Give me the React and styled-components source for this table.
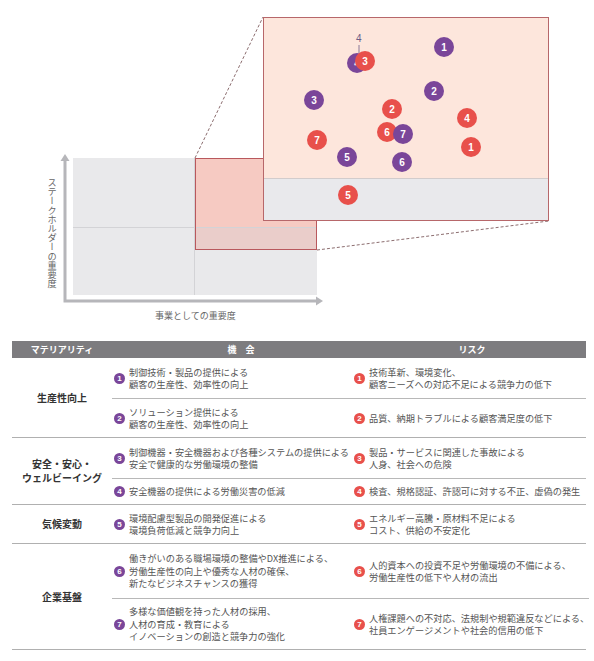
import React from "react"
import styled, { createGlobalStyle } from "styled-components"

const PURPLE = "#7a4699"
const RED = "#e8504b"

const GlobalStyle = createGlobalStyle`
  body {
    margin: 0;
    background: #fff;
    font-family: "Noto Sans CJK JP", "Noto Sans", sans-serif;
    color: #555;
  }
`

const Page = styled.div`
  width: 594px;
  height: 661px;
  display: flex;
  flex-direction: column;
`

const Chart = styled.div`
  position: relative;
  height: 341px;
  flex: none;
`

const ChartSvg = styled.svg`
  position: absolute;
  left: 0;
  top: 0;
`

const AxisLabelY = styled.div`
  position: absolute;
  left: 46px;
  top: 178px;
  writing-mode: vertical-rl;
  font-size: 9.2px;
  line-height: 12px;
  color: #666;
`

const AxisLabelX = styled.div`
  position: absolute;
  left: 155px;
  top: 309px;
  font-size: 9px;
  line-height: 14px;
  color: #666;
`

const Marker = styled.div`
  position: absolute;
  left: ${p => p.$x - 10}px;
  top: ${p => p.$y - 10}px;
  width: 20px;
  height: 20px;
  border-radius: 50%;
  background: ${p => (p.$tone === "purple" ? PURPLE : RED)};
  color: #fff;
  font-family: "Liberation Sans", Arial, sans-serif;
  font-weight: bold;
  font-size: 10px;
  display: flex;
  align-items: center;
  justify-content: center;
`

const Callout = styled.div`
  position: absolute;
  left: 356px;
  top: 33px;
  font-family: "Liberation Sans", Arial, sans-serif;
  font-size: 10px;
  color: #6c5c86;
`

const Table = styled.div`
  margin-left: 12px;
  width: 574px;
  display: flex;
  flex-direction: column;
`

const HeadRow = styled.div`
  display: grid;
  grid-template-columns: 100px 238px 1fr;
  height: 17px;
  background: #7d7c7f;
  color: #fff;
  font-size: 9px;
  font-weight: bold;
  align-items: center;
`

const HeadCell = styled.div`
  text-align: center;
  padding-left: ${p => p.$shift || 0}px;
`

const Group = styled.div`
  display: grid;
  grid-template-columns: 100px 1fr;
  border-bottom: 1px solid #b0b0b0;
`

const Materiality = styled.div`
  display: flex;
  align-items: center;
  justify-content: center;
  text-align: center;
  font-size: 10px;
  line-height: 14px;
  font-weight: bold;
  color: #333;
`

const Items = styled.div`
  display: flex;
  flex-direction: column;
`

const ItemRow = styled.div`
  box-sizing: border-box;
  height: ${p => p.$h}px;
  display: grid;
  grid-template-columns: 238px 1fr;
  & + & {
    border-top: 1px solid #b8b8b8;
  }
`

const Cell = styled.div`
  display: flex;
  align-items: center;
  gap: 4px;
  padding-left: ${p => p.$pad}px;
`

const Badge = styled.span`
  flex: none;
  width: 11px;
  height: 11px;
  border-radius: 50%;
  background: ${p => (p.$tone === "purple" ? PURPLE : RED)};
  color: #fff;
  font-family: "Liberation Sans", Arial, sans-serif;
  font-weight: bold;
  font-size: 8px;
  display: flex;
  align-items: center;
  justify-content: center;
`

const Text = styled.div`
  font-size: 9.2px;
  line-height: 12.5px;
  color: #555;
  white-space: nowrap;
`

const markers = [
  { n: 4, tone: "purple", x: 357, y: 63 },
  { n: 3, tone: "red", x: 365, y: 61 },
  { n: 1, tone: "purple", x: 444, y: 47 },
  { n: 2, tone: "purple", x: 434, y: 91 },
  { n: 3, tone: "purple", x: 314, y: 100 },
  { n: 2, tone: "red", x: 392, y: 109 },
  { n: 4, tone: "red", x: 467, y: 118 },
  { n: 7, tone: "red", x: 317, y: 140 },
  { n: 6, tone: "red", x: 387, y: 132 },
  { n: 7, tone: "purple", x: 403, y: 134 },
  { n: 1, tone: "red", x: 471, y: 147 },
  { n: 5, tone: "purple", x: 347, y: 157 },
  { n: 6, tone: "purple", x: 402, y: 162 },
  { n: 5, tone: "red", x: 348, y: 195 },
]

const groups = [
  {
    label: ["生産性向上"],
    items: [
      { h: 40, n: 1, opp: ["制御技術・製品の提供による", "顧客の生産性、効率性の向上"], risk: ["技術革新、環境変化、", "顧客ニーズへの対応不足による競争力の低下"] },
      { h: 39, n: 2, opp: ["ソリューション提供による", "顧客の生産性、効率性の向上"], risk: ["品質、納期トラブルによる顧客満足度の低下"] },
    ],
  },
  {
    label: ["安全・安心・", "ウェルビーイング"],
    items: [
      { h: 40, n: 3, opp: ["制御機器・安全機器および各種システムの提供による", "安全で健康的な労働環境の整備"], risk: ["製品・サービスに関連した事故による", "人身、社会への危険"] },
      { h: 26, n: 4, opp: ["安全機器の提供による労働災害の低減"], risk: ["検査、規格認証、許認可に対する不正、虚偽の発生"] },
    ],
  },
  {
    label: ["気候変動"],
    items: [
      { h: 38, n: 5, opp: ["環境配慮型製品の開発促進による", "環境負荷低減と競争力向上"], risk: ["エネルギー高騰・原材料不足による", "コスト、供給の不安定化"] },
    ],
  },
  {
    label: ["企業基盤"],
    items: [
      { h: 54, n: 6, opp: ["働きがいのある職場環境の整備やDX推進による、", "労働生産性の向上や優秀な人材の確保、", "新たなビジネスチャンスの獲得"], risk: ["人的資本への投資不足や労働環境の不備による、", "労働生産性の低下や人材の流出"] },
      { h: 51, n: 7, opp: ["多様な価値観を持った人材の採用、", "人材の育成・教育による", "イノベーションの創造と競争力の強化"], risk: ["人権課題への不対応、法規制や規範違反などによる、", "社員エンゲージメントや社会的信用の低下"] },
    ],
  },
]

const Lines = ({ lines }) => (
  <Text>
    {lines.map((l, i) => (
      <div key={i}>{l}</div>
    ))}
  </Text>
)

const MapChart = () => (
  <Chart>
    <ChartSvg width="594" height="341">
      <rect x="73" y="158" width="244" height="137" fill="#e9e9eb" />
      <line x1="73" y1="227.5" x2="317" y2="227.5" stroke="#d3d3d6" />
      <line x1="194.5" y1="158" x2="194.5" y2="295" stroke="#d3d3d6" />
      <rect x="195" y="158" width="122" height="69" fill="#f6cac2" />
      <rect x="195" y="228" width="122" height="22" fill="#eacdca" />
      <rect x="195.5" y="158.5" width="121" height="91" fill="none" stroke="#b9585d" />
      <polyline points="65,160 65,301 318,301" fill="none" stroke="#b6b6ba" strokeWidth="3" />
      <polygon points="65,154 60.5,161 69.5,161" fill="#b6b6ba" />
      <polygon points="323,301 316,296.5 316,305.5" fill="#b6b6ba" />
      <line x1="195" y1="158" x2="263" y2="17" stroke="#8c6d6f" strokeDasharray="3 2" />
      <line x1="317" y1="250" x2="549" y2="221" stroke="#8c6d6f" strokeDasharray="3 2" />
      <rect x="263" y="17" width="286" height="161" fill="#fde6dc" />
      <rect x="263" y="178" width="286" height="43" fill="#e9e9ec" />
      <line x1="263" y1="178.5" x2="549" y2="178.5" stroke="#d2cccc" />
      <rect x="263.5" y="17.5" width="285" height="203" fill="none" stroke="#b7676a" />
      <line x1="359" y1="45" x2="359" y2="53" stroke="#6c5c86" strokeWidth="0.8" />
    </ChartSvg>
    <Callout>4</Callout>
    {markers.map((m, i) => (
      <Marker key={i} $x={m.x} $y={m.y} $tone={m.tone}>
        {m.n}
      </Marker>
    ))}
    <AxisLabelY>ステークホルダーの重要度</AxisLabelY>
    <AxisLabelX>事業としての重要度</AxisLabelX>
  </Chart>
)

const App = () => (
  <Page>
    <GlobalStyle />
    <MapChart />
    <Table>
      <HeadRow>
        <HeadCell>マテリアリティ</HeadCell>
        <HeadCell $shift={20}>機　会</HeadCell>
        <HeadCell $shift={8}>リスク</HeadCell>
      </HeadRow>
      {groups.map((g, gi) => (
        <Group key={gi}>
          <Materiality>
            <div>
              {g.label.map((l, i) => (
                <div key={i}>{l}</div>
              ))}
            </div>
          </Materiality>
          <Items>
            {g.items.map(it => (
              <ItemRow key={it.n} $h={it.h}>
                <Cell $pad={2}>
                  <Badge $tone="purple">{it.n}</Badge>
                  <Lines lines={it.opp} />
                </Cell>
                <Cell $pad={4}>
                  <Badge $tone="red">{it.n}</Badge>
                  <Lines lines={it.risk} />
                </Cell>
              </ItemRow>
            ))}
          </Items>
        </Group>
      ))}
    </Table>
  </Page>
)

export default App
